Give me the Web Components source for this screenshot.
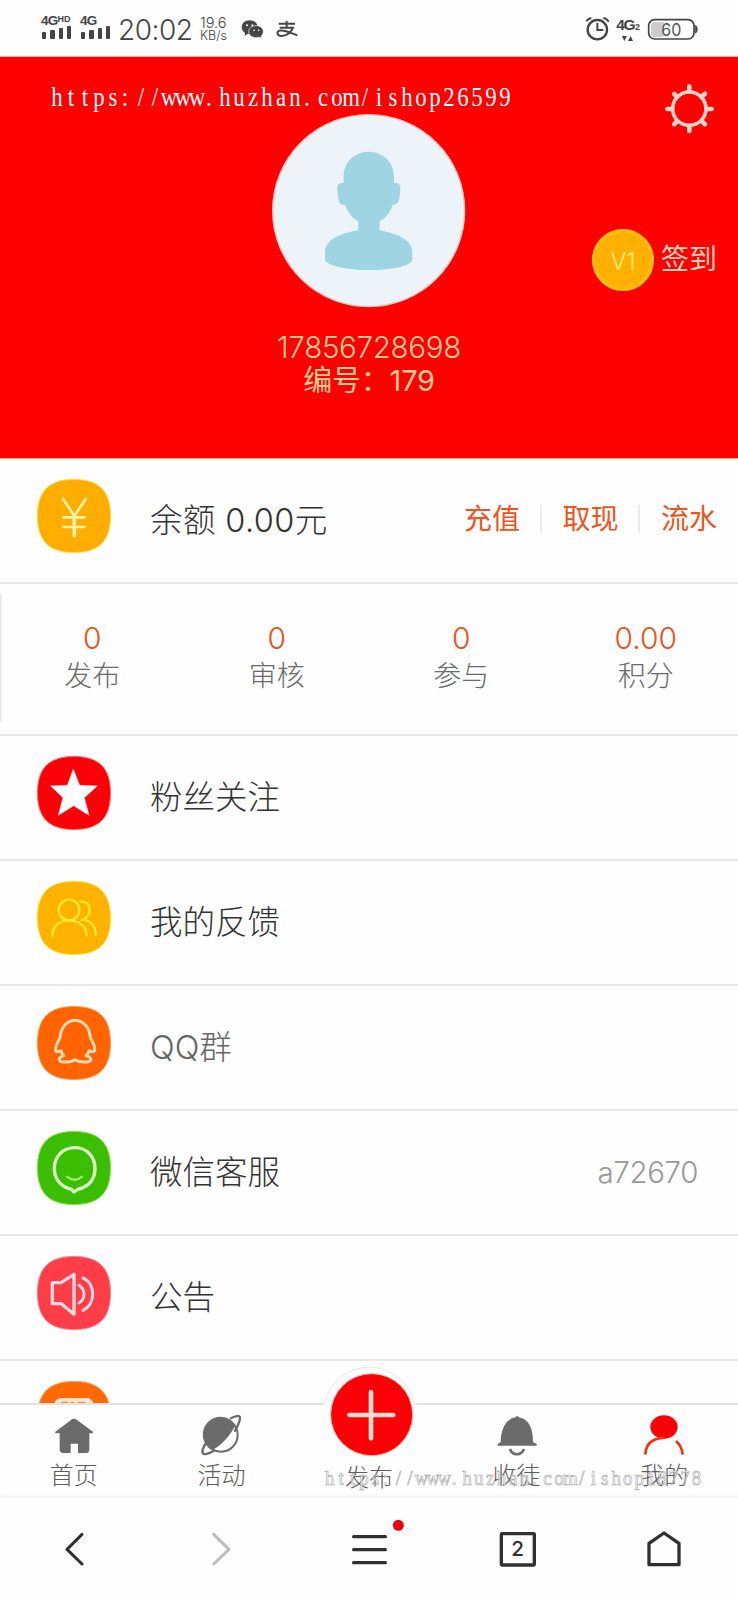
<!DOCTYPE html>
<html lang="zh-CN">
<head>
<meta charset="utf-8">
<title>我的</title>
<style>
html,body{margin:0;padding:0}
body{width:738px;height:1600px;overflow:hidden;background:#fefefe;font-family:Inter,"Noto Sans CJK SC","Noto Sans",sans-serif;font-weight:300;color:#333}
</style>
</head>
<body>
<phone-screen></phone-screen>
<script>
const define = (name, html, setup) => {
  const t = document.createElement('template');
  t.innerHTML = html;
  customElements.define(name, class extends HTMLElement {
    constructor() {
      super();
      this.attachShadow({mode: 'open'}).appendChild(t.content.cloneNode(true));
    }
    connectedCallback() { if (setup) setup(this, this.shadowRoot); }
  });
};

const squircle = (x, y, fill, edge) => `<path transform="translate(${x} ${y})" fill="${fill}" stroke="${edge}" stroke-width="3" d="M111 1.5C186 1.5 220.500 36 220.500 111S186 220.500 111 220.500 1.500 186 1.500 111 36 1.500 111 1.500Z"/>`;

const ICONS = {
  yen: ['111 87 222 222', 74, 74, squircle(111, 87, '#ffad00', '#ffdc2e') + '<g fill="none" stroke="#fff3a8" stroke-width="8" stroke-linecap="round"><path d="M189 147L223 198L257 147M190 202H254M190 231H254"/><path d="M223 198V257" stroke-width="11"/></g>'],
  star: ['111 48 222 222', 74, 74, squircle(111, 48, '#fb0006', '#ff6b60') + '<path fill="#fff" stroke="#ffdada" stroke-width="2" stroke-linejoin="round" d="M220 88L239 136L292 138L253 173L267 226L221 197L175 226L189 173L152 138L202 136Z"/>'],
  friends: ['111 423 222 222', 74, 74, squircle(111, 423, '#ffb300', '#ffe324') + '<g fill="none" stroke="#ffe82e" stroke-width="7" stroke-linecap="round"><circle cx="207" cy="510" r="31"/><path d="M157 589C157 560 176 541 207 541S260 560 260 587"/><path d="M242 485C260 484 270 497 269 512C268 526 259 534 250 539C273 544 287 559 287 584"/></g>'],
  qq: ['111 799 222 222', 74, 74, squircle(111, 799, '#ff6400', '#ff9a56') + '<path fill="none" stroke="#ffd9b8" stroke-width="9" stroke-linejoin="round" d="M225 842C198 843 182 866 180 894C170 912 163 930 169 936C175 937 180 933 184 933C184 939 188 945 191 948C177 952 173 963 184 966C199 968 216 967 225 960C235 967 253 968 266 966C278 963 274 952 258 948C263 944 266 939 267 933C273 936 280 937 283 934C287 923 281 910 271 895C269 866 253 843 225 842Z"/>'],
  service: ['111 94 222 222', 74, 74, squircle(111, 94, '#3bbd00', '#82e546') + '<g fill="none" stroke="#dcffc7"><path stroke-width="10" stroke-linejoin="round" d="M225 144C188 144 163 171 163 207C163 243 189 264 215 269L222 277L235 268C264 262 285 241 285 207C285 171 260 144 225 144Z"/><path stroke="#9df069" stroke-width="7" stroke-linecap="round" d="M201 231Q224 250 246 231"/></g>'],
  speaker: ['111 469 222 222', 74, 74, squircle(111, 469, '#ff3d49', '#ff7d80') + '<g fill="none" stroke="#ffd9dc" stroke-width="10" stroke-linejoin="round" stroke-linecap="round"><path d="M157 549H183L222 524V644L184 612H157Z"/><path stroke-width="9" d="M237 557C257 569 257 598 237 610M249 535C288 552 288 614 249 632"/></g>'],
  order: ['111 845 222 222', 74, 74, squircle(111, 845, '#ff6a00', '#ff9a56') + '<path fill="#ffe4d0" d="M165 912V906Q174 896 186 896H262Q274 896 281 912V940H165Z"/><path stroke="#ff8a40" stroke-width="4" d="M184 909H205M213 909H222M232 909H256"/>'],
  avatar: ['37 26 580 580', 193.3, 193.3, '<circle cx="327" cy="316" r="288" fill="#edf4f9" stroke="#ffc5b8" stroke-width="4"/><path fill="#9fd5e2" d="M327 139C284 139 252 171 252 214V233C236 232 232 238 233 257L236 280C238 294 244 299 257 299C264 322 278 338 296 348V375C253 383 200 397 196 438V463C199 482 270 494 327 494S456 484 458 463V438C454 397 402 384 360 375V348C378 338 392 322 399 299C412 298 417 291 419 278L422 253C423 239 419 233 403 233V214C403 171 370 139 327 139Z"/>'],
  gear: ['283 41 148 148', 49.3, 49.3, '<g stroke="#ffd4c8" fill="none"><circle cx="356" cy="115" r="50" stroke-width="11"/><g stroke-width="14" stroke-linecap="round"><path d="M356 62V48M356 168V182M304 116H290M408 116H423M319 79L311 71M392 80L403 70M319 152L311 162M392 151L403 162"/></g></g>'],
  wechat: ['724 56 68 58', 22.7, 19.3, '<g fill="#454545"><path d="M750 60C735 60 726 70 726 81C726 88 730 94 736 98L734 106L744 101L751 102C765 102 774 93 774 81S764 60 750 60Z"/><path stroke="#fff" stroke-width="2" d="M770 76C756 76 747 84 747 94C747 105 757 112 770 112L777 111L785 114L784 108C788 104 791 100 791 94C791 84 782 76 770 76Z"/></g><g fill="#fff"><circle cx="742" cy="75" r="3"/><circle cx="758" cy="75" r="3"/><circle cx="763" cy="90" r="2.500"/><circle cx="777" cy="90" r="2.500"/></g>'],
  alipay: ['828 60 66 54', 22, 18, '<g fill="none" stroke="#454545" stroke-width="6"><path d="M836 71H885M860 63V83M839 83H879C874 96 861 108 844 108C831 108 829 96 838 92C851 88 868 97 892 106"/></g>'],
  alarm: ['648 48 74 74', 24.7, 24.7, '<g fill="none" stroke="#444" stroke-width="7"><circle cx="685" cy="89" r="29"/><path d="M685 69V90H703" stroke-width="6"/><path d="M652 64Q657 56 667 54M703 54Q714 56 719 65" stroke-width="6"/></g>'],
  arrows: ['758 100 40 20', 13.3, 6.7, '<path fill="#444" d="M761 103H776L768 118ZM779 118H794L787 103Z"/>'],
  battery: ['834 52 152 68', 50.700, 22.700, '<path d="M857 64H884V109H857Q846 109 846 99V75Q846 64 857 64Z" fill="#ccc"/><rect x="839" y="57" width="136" height="58" rx="18" fill="none" stroke="#444" stroke-width="5"/><path d="M979 74Q985 76 985 86T979 98Z" fill="#444" stroke="#444" stroke-width="2"/><text x="907" y="105" font-size="51" font-weight="400" fill="#555" text-anchor="middle" textLength="60" lengthAdjust="spacingAndGlyphs">60</text>'],
  home: ['130 150 180 150', 60, 50, '<path fill="#6b6b6b" d="M215 177Q221 174 228 179L277 215V220H266V270Q265 279 257 279H232V251H210V279H187Q177 277 177 269V220H164V215Z"/>'],
  planet: ['574 150 180 150', 60, 50, '<circle cx="664" cy="225" r="50" fill="none" stroke="#6b6b6b" stroke-width="6"/><path fill="#6b6b6b" d="M637 270A53 53 0 1 1 707 195C695 223 665 258 637 270Z"/><path fill="none" stroke="#6b6b6b" stroke-width="7" d="M691 176C706 167 721 165 721 173C721 183 712 202 704 215M621 246C608 263 606 278 611 281C618 285 635 278 644 271"/>'],
  bell: ['560 180 180 150', 60, 50, '<path fill="#6b6b6b" d="M646 202Q650 194 655 202C685 207 698 234 698 276L709 282V287H592V282L601 276C602 235 617 207 646 202Z"/><path fill="none" stroke="#6b6b6b" stroke-width="8" d="M629 297C636 318 663 318 671 297"/>'],
  me: ['1003 180 180 150', 60, 50, '<ellipse cx="1093" cy="231" rx="41" ry="35" fill="#fb0006"/><path fill="none" stroke="#f2330c" stroke-width="8" d="M1037 314C1038 286 1054 270 1078 265L1093 263M1129 273Q1147 289 1149 314"/>'],
  plus: ['57 36 300 294', 100, 98, '<circle cx="208" cy="186" r="137" fill="#fefefe"/><path d="M74 160A137 137 0 0 1 342 160" fill="none" stroke="#e2e8e4" stroke-width="3"/><circle cx="215" cy="194" r="123" fill="#fb0006" stroke="#ffb5a2" stroke-width="3"/><path d="M213 126V265M148 195H280" stroke="#ffdcd0" stroke-width="14" stroke-linecap="round"/>'],
  back: ['131 480 180 180', 60, 60, '<path d="M245 523L200 568L245 612" fill="none" stroke="#303030" stroke-width="9" stroke-linecap="round" stroke-linejoin="round"/>'],
  forward: ['574 480 180 180', 60, 60, '<path d="M642 523L688 568L642 612" fill="none" stroke="#bdbdbd" stroke-width="9" stroke-linecap="round" stroke-linejoin="round"/>'],
  menu: ['117 510 180 180', 60, 60, '<path d="M161 560H256M161 599H256M161 638H256" stroke="#303030" stroke-width="10" stroke-linecap="round"/><circle cx="295" cy="526" r="16.500" fill="#ef0010"/>'],
  windows: ['560 510 180 180', 60, 60, '<rect x="603" y="551" width="99" height="94" rx="2" fill="none" stroke="#303030" stroke-width="10"/><text x="652" y="619" font-size="62" font-weight="500" fill="#303030" text-anchor="middle">2</text>'],
  house: ['1003 510 180 180', 60, 60, '<path d="M1093 549L1138 580V644H1048V580Z" fill="none" stroke="#303030" stroke-width="10" stroke-linejoin="round"/>']
};

define('ui-icon', '<style>:host{display:block;flex:none}svg{display:block;overflow:visible}</style><div></div>', (el, root) => {
  const icon = ICONS[el.getAttribute('name')];
  if (!icon) return;
  const [box, w, h, body] = icon;
  root.querySelector('div').innerHTML = `<svg width="${w}" height="${h}" viewBox="${box}">${body}</svg>`;
});

/* Fixed-pitch overlay line: every glyph is condensed and centred in its own cell. */
define('water-mark', '<style>:host{display:block;pointer-events:none}svg{display:block;overflow:visible}text{font-family:"Liberation Serif",serif;font-weight:400;text-anchor:middle}</style><svg width="10" height="30"><text y="24" transform="scale(.86 1)"></text></svg>', (el, root) => {
  const s = el.getAttribute('text'), pitch = +el.getAttribute('pitch') / .86, t = root.querySelector('text');
  t.textContent = s;
  t.setAttribute('x', [...s].map((c, i) => ((i + (/[.:]/.test(c) ? .35 : .5)) * pitch).toFixed(2)).join(' '));
  t.setAttribute('font-size', el.getAttribute('size'));
  t.setAttribute('fill', el.getAttribute('fill'));
  if (el.hasAttribute('stroke')) { t.setAttribute('stroke', el.getAttribute('stroke')); t.setAttribute('stroke-width', '.7'); }
});

define('signal-bars', `<style>
:host{display:block;width:32px;color:#444}
.t{font:700 13.500px/12px "Liberation Sans",sans-serif;display:flex;align-items:flex-start;height:11px;letter-spacing:-.8px}
small{font:700 9px/8px "Liberation Sans",sans-serif;letter-spacing:0}
.b{display:flex;align-items:flex-end;gap:4px;height:13px;padding-left:1px}
i{width:4.300px;border-radius:1px;background:#444}
</style><div class="t"><slot></slot><small></small></div><div class="b"><i style="height:7px"></i><i style="height:9px"></i><i style="height:11px"></i><i style="height:13px"></i></div>`,
(el, root) => { root.querySelector('small').textContent = el.getAttribute('sup') || ''; });

define('status-bar', `<style>
:host{display:flex;align-items:flex-start;height:57px;box-sizing:border-box;padding:15px 40px 0 41px;color:#444}
.time{font-size:28px;line-height:31px;margin-left:6px;width:74px;letter-spacing:-.5px;white-space:nowrap}
.rate{font-size:14.500px;line-height:13px;color:#444;width:34px;margin-left:8px;padding-top:1px;white-space:nowrap}
.rate div+div{font-size:12.500px}
.net{width:24px;margin-left:7px;padding-top:2px;font:700 15.500px/15px "Liberation Sans",sans-serif;letter-spacing:-1.500px;white-space:nowrap}
.net small{font-size:9px;margin-left:1px}
.net ui-icon{margin:0 0 0 5px}
</style>
<signal-bars sup="HD">4G</signal-bars><signal-bars style="margin-left:7px">4G</signal-bars>
<div class="time">20:02</div><div class="rate"><div>19.6</div><div>KB/s</div></div>
<ui-icon name="wechat" style="margin:4px 0 0 7px"></ui-icon><ui-icon name="alipay" style="margin:5px 0 0 12px"></ui-icon>
<ui-icon name="alarm" style="margin:1px 0 0 auto"></ui-icon>
<div class="net">4G<small>2</small><ui-icon name="arrows"></ui-icon></div><ui-icon name="battery" style="margin:2.500px 0 0 7px"></ui-icon>`);

define('profile-header', `<style>
:host{display:grid;grid-template-columns:1fr 240px 1fr;height:401px;background:#ff0000;box-shadow:0 -1px 0 #ffb3a3,0 1px 0 #ffb37c;position:relative;z-index:1}
.user{grid-column:2;display:flex;flex-direction:column;align-items:center;padding-top:56.500px;color:#ffcf9b;line-height:33px;white-space:nowrap}
.phone{font-size:29.500px;margin-top:24px;letter-spacing:-.3px;font-weight:350}
.no{font-size:29px;font-weight:400;letter-spacing:-.2px}
.side{display:flex;flex-direction:column;align-items:flex-end;padding:26.500px 24px 0 0}
.sign{display:flex;align-items:center;margin:96px -3px 0 0;color:#ffd3bd;font-size:28px;line-height:60px}
.coin{box-sizing:border-box;width:62px;height:62px;border-radius:50%;background:#ffb000;border:2px solid #ffc21c;box-shadow:inset 0 0 0 2px #ffb90a;color:#fff07a;font-size:23.500px;line-height:61px;text-align:center;margin-right:7px}
.sign span+span{font-weight:400;height:62px}
</style>
<div class="user"><ui-icon name="avatar"></ui-icon><div class="phone">17856728698</div><div class="no">编号：179</div></div>
<div class="side"><ui-icon name="gear"></ui-icon><div class="sign"><span class="coin">V1</span><span>签到</span></div></div>`);

define('menu-row', `<style>
:host{display:flex;height:125px;box-sizing:border-box;border-bottom:2px solid #e9e9e9;padding:0 40px 0 37px;font-size:32.500px;line-height:123px;white-space:nowrap}
ui-icon{margin:20px 39px 0 0}
.end{margin-left:auto;display:flex}
</style><ui-icon></ui-icon><span><slot></slot></span><span class="end"><slot name="end"></slot></span>`,
(el, root) => {
  const icon = document.createElement('ui-icon');
  icon.setAttribute('name', el.getAttribute('icon'));
  root.querySelector('ui-icon').replaceWith(icon);
});

define('balance-actions', `<style>
:host{display:flex;align-items:center;height:120px;font-size:28px;line-height:30px;color:#ec5420;font-weight:400;letter-spacing:0}
i{width:2px;height:28px;background:#ebebeb;margin:0 20.500px 0 20px}
</style><span>充值</span><i></i><span>取现</span><i></i><span>流水</span>`);

define('stat-cell', `<style>
:host{display:block;text-align:center;color:#6a6a6a;font-size:28px;line-height:39px}
b{display:block;font-weight:300;color:#e8531c;font-size:30px;line-height:37px}
</style><b></b><slot></slot>`, (el, root) => { root.querySelector('b').textContent = el.getAttribute('value'); });

define('stat-strip', `<style>
:host{display:grid;grid-template-columns:repeat(4,1fr);height:152px;box-sizing:border-box;border-bottom:2px solid #e9e9e9;padding-top:36px;background:linear-gradient(90deg,#e4e4e4,#fefefe) 0 10px/3px 128px no-repeat}
</style><stat-cell value="0">发布</stat-cell><stat-cell value="0">审核</stat-cell><stat-cell value="0">参与</stat-cell><stat-cell value="0.00">积分</stat-cell>`);

define('tab-item', `<style>
:host{display:flex;flex-direction:column;align-items:center;padding-top:5px;font-size:24px;line-height:32px;color:#5c5c5c}
:host([raised]) ui-icon{margin-top:-48px}
:host([raised]) .label{margin-top:2px}
</style><ui-icon></ui-icon><span class="label"><slot></slot></span>`,
(el, root) => {
  const icon = document.createElement('ui-icon');
  icon.setAttribute('name', el.getAttribute('icon'));
  root.querySelector('ui-icon').replaceWith(icon);
});

define('tab-bar', `<style>
:host{display:grid;grid-template-columns:repeat(5,1fr);height:94px;box-sizing:border-box;border-top:2px solid #e2e2e2;border-bottom:1px solid #f3f3f3;background:#fefefe;position:relative}
</style><tab-item icon="home">首页</tab-item><tab-item icon="planet">活动</tab-item><tab-item icon="plus" raised>发布</tab-item><tab-item icon="bell">收徒</tab-item><tab-item icon="me">我的</tab-item>`);

define('browser-bar', `<style>
:host{display:grid;grid-template-columns:repeat(5,1fr);justify-items:center;height:103px;padding-top:23px;box-sizing:border-box;background:#fefefe;box-shadow:0 -1px 3px #f0f0f0;position:relative}
</style><ui-icon name="back"></ui-icon><ui-icon name="forward"></ui-icon><ui-icon name="menu"></ui-icon><ui-icon name="windows"></ui-icon><ui-icon name="house"></ui-icon>`);

define('phone-screen', `<style>
:host{display:flex;flex-direction:column;width:738px;height:1600px;position:relative;overflow:hidden;background:#fefefe}
status-bar,profile-header,tab-bar,browser-bar{flex:none}
main{flex:1;min-height:0;overflow:hidden}
.balance{height:126px;padding-top:1px;padding-right:21px;letter-spacing:.4px}
.qq{color:#666}
.wx{color:#999;font-size:29.500px;line-height:122px;letter-spacing:-.4px}
water-mark{position:absolute;z-index:3}
</style>
<status-bar></status-bar>
<profile-header></profile-header>
<main>
<menu-row class="balance" icon="yen">余额 0.00元<balance-actions slot="end"></balance-actions></menu-row>
<stat-strip></stat-strip>
<menu-row icon="star">粉丝关注</menu-row>
<menu-row icon="friends">我的反馈</menu-row>
<menu-row icon="qq" class="qq">QQ群</menu-row>
<menu-row icon="service">微信客服<span slot="end" class="wx">a72670</span></menu-row>
<menu-row icon="speaker">公告</menu-row>
<menu-row icon="order"></menu-row>
</main>
<tab-bar></tab-bar>
<browser-bar></browser-bar>
<water-mark style="left:50px;top:82px" text="https://www.huzhan.com/ishop26599" pitch="14" size="26.5" fill="#fff"></water-mark>
<water-mark style="left:324px;top:1461px" text="https://www.huzhan.com/ishop18778" pitch="11.46" size="22" fill="#ffffffaa" stroke="#aaa"></water-mark>`);
</script>
</body>
</html>
